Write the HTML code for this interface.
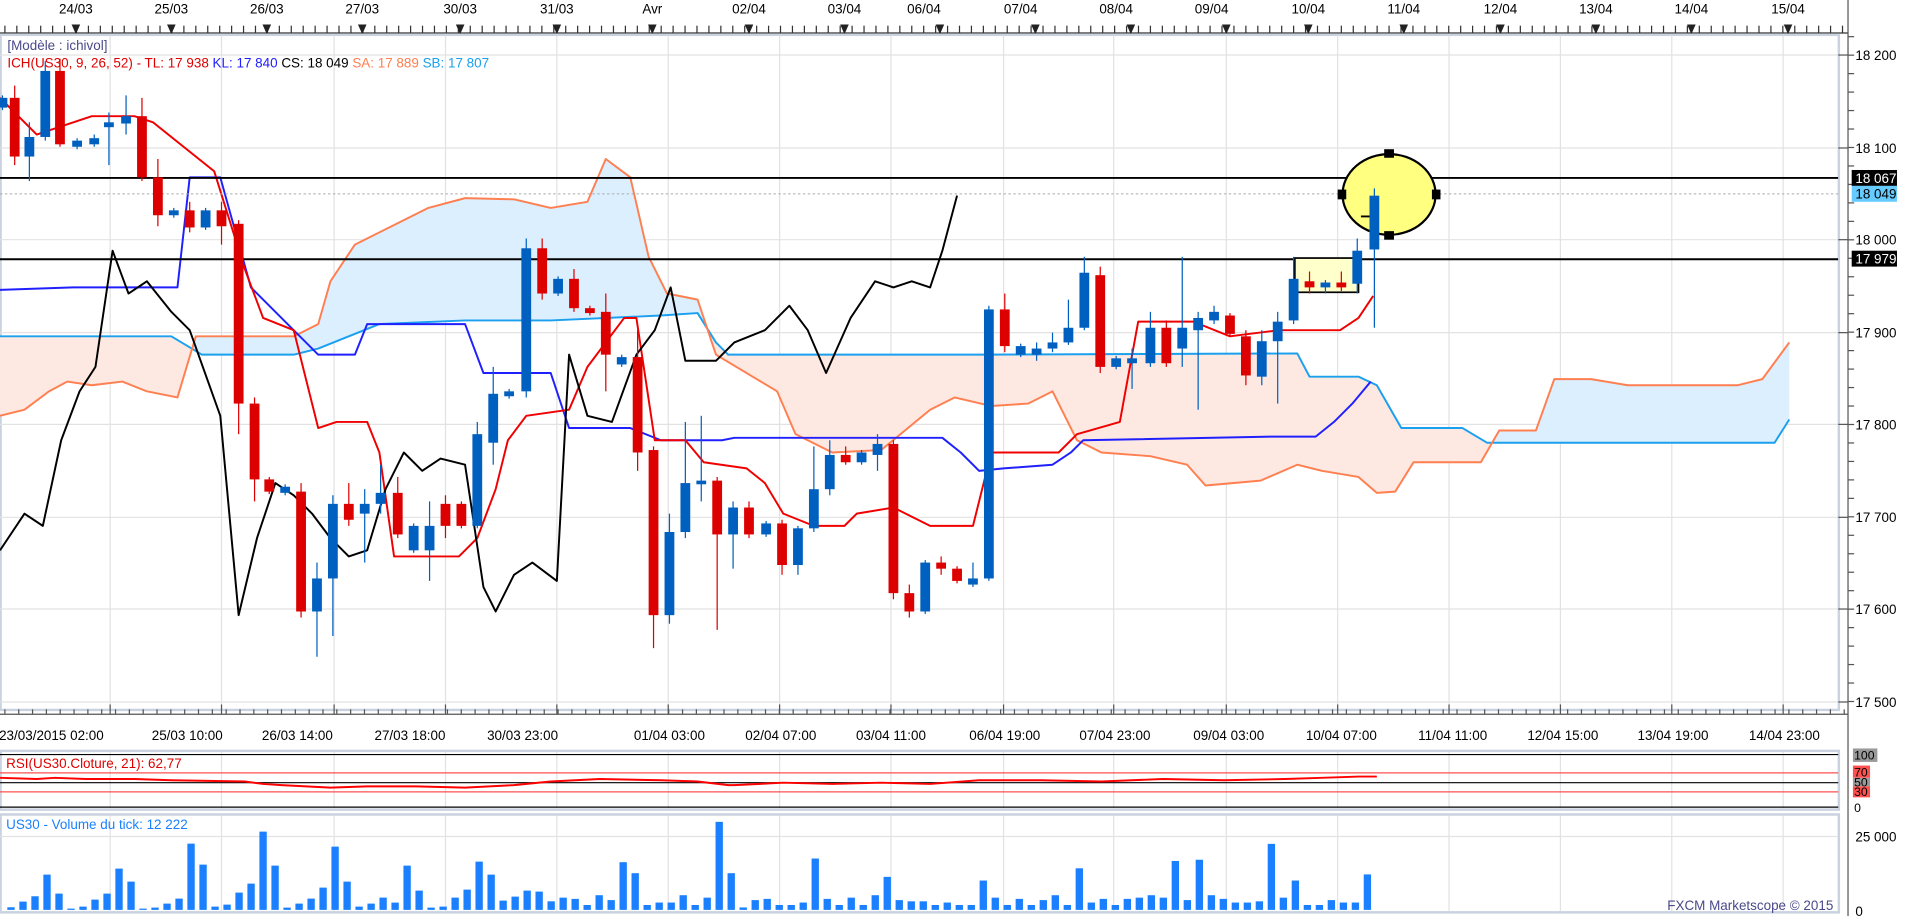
<!DOCTYPE html>
<html><head><meta charset="utf-8"><style>
html,body{margin:0;padding:0;background:#fff;overflow:hidden}
svg{display:block}
text{font-family:"Liberation Sans",sans-serif}
</style></head><body>
<svg id="s" width="1919" height="916" viewBox="0 0 1568 749" preserveAspectRatio="none" xmlns="http://www.w3.org/2000/svg">
<defs>
<clipPath id="main"><rect x="0" y="28" width="1502" height="552"/></clipPath>
</defs>
<rect width="1568" height="749" fill="#fff"/>
<g id="topax"></g>
<g font-size="11" fill="#000" text-anchor="middle">
<text x="62" y="11">24/03</text><text x="140" y="11">25/03</text><text x="218" y="11">26/03</text><text x="296" y="11">27/03</text><text x="376" y="11">30/03</text><text x="455" y="11">31/03</text><text x="533" y="11">Avr</text><text x="612" y="11">02/04</text><text x="690" y="11">03/04</text><text x="755" y="11">06/04</text><text x="834" y="11">07/04</text><text x="912" y="11">08/04</text><text x="990" y="11">09/04</text><text x="1069" y="11">10/04</text><text x="1147" y="11">11/04</text><text x="1226" y="11">12/04</text><text x="1304" y="11">13/04</text><text x="1382" y="11">14/04</text><text x="1461" y="11">15/04</text>
</g>
<rect x="0.5" y="28.5" width="1502" height="552" fill="#fff" stroke="#c9d2de" stroke-width="2"/>
<g id="grid" stroke="#e2e2e2" stroke-width="1"></g>
<g clip-path="url(#main)">
<g id="cloud"></g>
<g id="lines" fill="none" stroke-width="1.6" stroke-linejoin="round"></g>
<line x1="0" y1="145.5" x2="1502" y2="145.5" stroke="#000" stroke-width="1.6"/>
<line x1="0" y1="212" x2="1502" y2="212" stroke="#000" stroke-width="1.6"/>
<line x1="0" y1="158.5" x2="1502" y2="158.5" stroke="#aaa" stroke-width="0.8" stroke-dasharray="2,2"/>
<rect x="1058" y="211" width="52" height="28" fill="#ffffcc" stroke="#000" stroke-width="1.4"/>
<g id="candles"></g>
<ellipse cx="1135" cy="159" rx="38" ry="33" fill="#ffff80" stroke="#000" stroke-width="1.8"/>
<g fill="#000"><rect x="1131" y="122" width="8" height="7"/><rect x="1131" y="189" width="8" height="7"/><rect x="1093" y="155" width="7" height="8"/><rect x="1170" y="155" width="7" height="8"/></g>
<line x1="1112" y1="177" x2="1126" y2="177" stroke="#000" stroke-width="1.5"/>
<rect x="1119" y="160" width="8" height="44" fill="#0060c0"/><line x1="1123" y1="154" x2="1123" y2="268" stroke="#0060c0"/>
</g>
<text x="6" y="41" font-size="11" fill="#4a4a8a">[Modèle : ichivol]</text>
<text x="6" y="55" font-size="11"><tspan fill="#e00000">ICH(US30, 9, 26, 52) -  TL: 17 938  </tspan><tspan fill="#2020ff">KL: 17 840  </tspan><tspan fill="#000">CS: 18 049  </tspan><tspan fill="#ff7f50">SA: 17 889  </tspan><tspan fill="#1aa0ee">SB: 17 807</tspan></text>
<line x1="1510" y1="0" x2="1510" y2="749" stroke="#555" stroke-width="1"/>
<g id="rticks" stroke="#555"></g>
<g font-size="11" fill="#000">
<text x="1516" y="49">18 200</text><text x="1516" y="125">18 100</text><text x="1516" y="200">18 000</text><text x="1516" y="276">17 900</text><text x="1516" y="351">17 800</text><text x="1516" y="427">17 700</text><text x="1516" y="502">17 600</text><text x="1516" y="578">17 500</text>
</g>
<rect x="1513" y="139" width="37" height="13" fill="#000"/><text x="1516" y="149.5" font-size="11" fill="#fff">18 067</text>
<rect x="1513" y="152" width="37" height="13" fill="#66ccff"/><text x="1516" y="162.5" font-size="11" fill="#000">18 049</text>
<rect x="1513" y="205" width="37" height="13" fill="#000"/><text x="1516" y="215.5" font-size="11" fill="#fff">17 979</text>
<line x1="0" y1="584" x2="1510" y2="584" stroke="#555"/>
<g id="btick" stroke="#555"></g>
<g font-size="11" fill="#000" text-anchor="middle">
<text x="42" y="605">23/03/2015 02:00</text><text x="153" y="605">25/03 10:00</text><text x="243" y="605">26/03 14:00</text><text x="335" y="605">27/03 18:00</text><text x="427" y="605">30/03 23:00</text><text x="547" y="605">01/04 03:00</text><text x="638" y="605">02/04 07:00</text><text x="728" y="605">03/04 11:00</text><text x="821" y="605">06/04 19:00</text><text x="911" y="605">07/04 23:00</text><text x="1004" y="605">09/04 03:00</text><text x="1096" y="605">10/04 07:00</text><text x="1187" y="605">11/04 11:00</text><text x="1277" y="605">12/04 15:00</text><text x="1367" y="605">13/04 19:00</text><text x="1458" y="605">14/04 23:00</text>
</g>
<rect x="0.5" y="614" width="1502" height="48" fill="#fff" stroke="#c9d2de" stroke-width="2"/>
<g id="grid2" stroke="#e2e2e2"></g>
<line x1="0" y1="617" x2="1502" y2="617" stroke="#000"/>
<line x1="0" y1="632" x2="1502" y2="632" stroke="#ff5050"/>
<line x1="0" y1="640" x2="1502" y2="640" stroke="#000"/>
<line x1="0" y1="647.5" x2="1502" y2="647.5" stroke="#ff5050"/>
<line x1="0" y1="660" x2="1502" y2="660" stroke="#000"/>
<polyline id="rsi" fill="none" stroke="#f00" stroke-width="1.6" points=""/>
<text x="5" y="628" font-size="11" fill="#e00000">RSI(US30.Cloture, 21): 62,77</text>
<rect x="1514" y="612" width="20" height="11" fill="#999"/><text x="1515" y="621" font-size="10" fill="#000">100</text>
<rect x="1514" y="626" width="14" height="10" fill="#ff5050"/><text x="1515" y="635" font-size="10" fill="#000">70</text>
<rect x="1514" y="636" width="14" height="7" fill="#999"/><text x="1515" y="643" font-size="10" fill="#000">50</text>
<rect x="1514" y="643" width="14" height="9" fill="#ff5050"/><text x="1515" y="651" font-size="10" fill="#000">30</text>
<text x="1515" y="664" font-size="10" fill="#000">0</text>
<rect x="0.5" y="666" width="1502" height="80" fill="#fff" stroke="#c9d2de" stroke-width="2"/>
<g id="grid3" stroke="#e2e2e2"></g>
<line x1="0" y1="684" x2="1502" y2="684" stroke="#e2e2e2"/>
<g id="vol" fill="#1a80ff"></g>
<text x="5" y="678" font-size="11" fill="#1a80ff">US30 - Volume du tick: 12 222</text>
<text x="1516" y="688" font-size="11" fill="#000">25 000</text>
<text x="1516" y="749" font-size="11" fill="#000">0</text>
<text x="1498" y="744" font-size="11" fill="#4a4a8a" text-anchor="end">FXCM Marketscope © 2015</text>
</svg>
<script>
const NS="http://www.w3.org/2000/svg";
function el(p,t,a){const e=document.createElementNS(NS,t);for(const k in a)e.setAttribute(k,a[k]);document.getElementById(p).appendChild(e);return e;}
el("topax","line",{x1:0,y1:27,x2:1510,y2:27,stroke:"#333"});
for(let x=4;x<1510;x+=9.75)el("topax","line",{x1:x,y1:21,x2:x,y2:27,stroke:"#333"});
[62,140,218,296,376,455,533,612,690,768,846,924,1002,1069,1147,1226,1304,1382,1461].forEach(x=>el("topax","path",{d:`M${x-3.5} 20 L${x+3.5} 20 L${x} 28 Z`,fill:"#222"}));
const gx=[90,181,273,364,455,546,637,728,820,910,1002,1093,1184,1275,1366,1457];
gx.forEach(x=>{el("grid","line",{x1:x,y1:29,x2:x,y2:580});el("grid2","line",{x1:x,y1:615,x2:x,y2:661});el("grid3","line",{x1:x,y1:667,x2:x,y2:745});el("btick","line",{x1:x,y1:576,x2:x,y2:584});});
for(let x=4;x<1510;x+=11.3)el("btick","line",{x1:x,y1:580,x2:x,y2:584});
[45,121,196,272,347,423,498,574].forEach(y=>{el("grid","line",{x1:0,y1:y,x2:1502,y2:y});el("rticks","line",{x1:1502,y1:y,x2:1510,y2:y});});
for(let y=30;y<580;y+=15.1)el("rticks","line",{x1:1510,y1:y,x2:1515,y2:y});
const TL=[[0,80],[30,110],[75,95],[110,95],[125,100],[175,140],[200,220],[215,260],[240,270],[260,350],[275,345],[300,345],[310,370],[322,455],[375,455],[390,440],[405,400],[415,360],[430,340],[465,335],[480,300],[510,260],[520,260],[535,360],[560,360],[575,378],[610,383],[625,395],[640,420],[665,430],[690,430],[700,420],[730,415],[760,430],[795,430],[810,370],[865,370],[880,355],[915,345],[930,263],[975,263],[1005,275],[1045,270],[1095,270],[1110,260],[1122,242]];
const KL=[[0,237],[60,235],[145,235],[155,145],[180,145],[205,235],[260,290],[290,290],[300,265],[380,265],[395,305],[450,305],[465,350],[515,350],[540,360],[590,360],[600,358],[770,358],[785,370],[800,385],[820,383],[860,380],[875,370],[885,360],[1040,357],[1075,357],[1090,345],[1105,330],[1120,312]];
const SB=[[0,275],[140,275],[165,290],[240,290],[260,285],[310,265],[380,262],[450,262],[540,258],[570,256],[585,280],[595,290],[800,290],[1060,289],[1070,308],[1110,308],[1125,315],[1145,350],[1195,350],[1215,362],[1450,362],[1462,343]];
const SA=[[0,340],[20,335],[40,320],[55,312],[75,315],[100,312],[120,320],[145,325],[160,275],[240,275],[260,265],[270,230],[290,200],[320,185],[350,170],[380,162],[420,163],[450,170],[480,165],[495,130],[515,145],[530,210],[545,240],[570,245],[585,290],[635,320],[650,355],[680,370],[720,368],[760,335],[780,325],[810,332],[840,330],[860,320],[880,360],[900,370],[940,373],[970,380],[985,397],[1030,393],[1060,380],[1080,385],[1110,390],[1125,403],[1140,402],[1155,378],[1210,378],[1225,352],[1255,352],[1270,310],[1300,310],[1330,315],[1420,315],[1440,310],[1462,280]];
const CS=[[0,450],[20,420],[35,430],[50,360],[65,320],[78,300],[92,205],[105,240],[120,230],[140,255],[155,270],[180,340],[195,503],[210,440],[225,395],[240,405],[255,420],[270,440],[285,455],[300,450],[315,400],[330,370],[345,385],[360,375],[380,380],[395,480],[405,500],[420,470],[435,460],[455,475],[465,290],[480,340],[500,345],[520,290],[535,270],[548,235],[560,295],[585,295],[600,280],[625,270],[645,250],[660,270],[675,305],[695,260],[715,230],[730,235],[745,230],[760,235],[770,205],[782,160]];
const P=a=>a.map(p=>p.join(",")).join(" ");
const band=P(SA)+" "+P(SB.slice().reverse());
const cp1=el("cloud","clipPath",{id:"above"});const c1=document.createElementNS(NS,"polygon");c1.setAttribute("points","0,0 "+P(SB)+" 1568,362 1568,0");cp1.appendChild(c1);
const cp2=el("cloud","clipPath",{id:"below"});const c2=document.createElementNS(NS,"polygon");c2.setAttribute("points","0,749 "+P(SB)+" 1568,362 1568,749");cp2.appendChild(c2);
el("cloud","polygon",{points:band,fill:"#dcefff","clip-path":"url(#above)"});
el("cloud","polygon",{points:band,fill:"#fde9e2","clip-path":"url(#below)"});
el("lines","polyline",{points:P(SB),stroke:"#1aa0ee"});
el("lines","polyline",{points:P(SA),stroke:"#ff7f50"});
el("lines","polyline",{points:P(KL),stroke:"#2020ff"});
el("lines","polyline",{points:P(TL),stroke:"#f00000"});
el("lines","polyline",{points:P(CS),stroke:"#000"});
const C=[[2,80,88,78,90,1],[12,80,128,70,135,0],[24,112,128,100,148,1],[37,58,112,50,115,1],[49,58,118,48,120,0],[63,115,120,113,122,1],[77,113,118,110,120,1],[89,100,104,92,135,1],[103,95,101,78,110,1],[116,95,145,80,148,0],[129,145,176,130,185,0],[142,172,176,170,178,1],[155,172,186,165,190,0],[168,172,186,170,188,1],[181,172,185,165,200,0],[195,183,330,180,355,0],[208,330,392,325,410,0],[220,392,402,390,404,0],[233,398,403,396,405,1],[246,402,500,395,505,0],[259,473,500,460,537,1],[272,412,473,405,520,1],[285,412,425,395,430,0],[298,412,420,400,460,1],[311,403,412,380,420,1],[325,403,437,390,440,0],[338,430,450,428,452,1],[351,430,450,410,475,1],[364,412,430,405,440,0],[377,412,430,410,432,0],[390,355,430,345,432,1],[403,322,362,300,380,1],[416,320,324,318,326,1],[430,203,320,195,325,1],[443,203,240,195,245,0],[456,228,240,226,242,1],[469,228,252,220,255,0],[482,252,256,250,258,0],[495,255,290,240,320,0],[508,292,298,290,300,1],[521,292,370,270,385,0],[534,368,503,365,530,0],[547,435,503,420,510,1],[560,395,435,345,440,1],[573,393,396,340,410,1],[586,393,437,390,515,0],[599,415,437,410,465,1],[612,415,437,410,440,0],[626,428,437,426,439,1],[639,428,462,425,470,0],[652,432,462,430,470,1],[665,400,432,365,435,1],[678,372,400,360,405,1],[691,372,378,365,380,0],[704,370,378,368,380,1],[717,363,372,355,385,1],[730,363,485,360,490,0],[743,485,500,478,505,0],[756,460,500,458,502,1],[769,460,465,455,470,0],[782,465,475,463,477,0],[795,473,478,460,480,1],[808,253,473,250,475,1],[821,253,283,240,288,0],[834,283,290,281,292,1],[847,285,290,280,295,1],[860,280,285,272,288,1],[873,268,280,245,282,1],[886,223,268,210,270,1],[899,225,300,218,305,0],[912,293,300,291,302,1],[925,293,297,285,318,1],[940,268,297,255,300,1],[953,268,297,262,300,0],[966,268,285,210,300,1],[979,260,270,255,335,1],[992,255,262,250,265,1],[1005,258,273,256,275,0],[1018,275,307,270,315,0],[1031,279,308,270,315,1],[1044,263,279,255,330,1],[1057,228,262,210,265,1],[1070,230,235,222,240,0],[1083,231,235,229,240,1],[1096,231,235,222,238,0],[1109,205,232,195,240,1]];
C.forEach(c=>{const col=c[5]?"#0060c0":"#dd0000";el("candles","line",{x1:c[0],y1:c[3],x2:c[0],y2:c[4],stroke:col,"stroke-width":1});el("candles","rect",{x:c[0]-4,y:c[1],width:8,height:Math.max(2,c[2]-c[1]),fill:col});});
const z=[503,486,470,405,462,507,501,480,462,387,426,507,504,492,477,312,375,501,495,459,432,276,378,504,492,477,444,321,426,501,492,474,489,378,453,504,501,474,450,366,405,483,471,453,456];
const V=[[443,738],[456,735],[469,733],[482,738],[495,730],[508,703],[521,712],[534,738],[547,736],[560,730],[573,738],[586,670],[599,712],[612,740],[626,733],[639,738],[652,738],[665,700],[678,733],[691,738],[704,738],[717,730],[730,715],[743,735],[756,735],[769,738],[782,738],[795,738],[808,718],[821,738],[834,733],[847,738],[860,730],[873,738],[886,708],[899,733],[912,738],[925,733],[940,730],[953,732],[966,702],[979,701],[992,730],[1005,733],[1018,736],[1031,735],[1044,688],[1057,718],[1070,738],[1083,738],[1096,736],[1109,736],[1122,713]];
const S=1.2235,base=744;const used=new Set();
for(let i=0;;i++){const x=(11+12*i)/S;if(x>1126)break;let top;
 if(i<z.length)top=(740+z[i]/3)/S;else{let bi=0,d=1e9;V.forEach((v,j)=>{const dd=Math.abs(v[0]-x);if(dd<d){d=dd;bi=j;}});
  if(used.has(bi)){top=738-((i*7)%6);}else{used.add(bi);top=V[bi][1]+2;}}
 el("vol","rect",{x:x-3,y:top,width:6,height:Math.max(1,base-top)});}
const rs=[[0,636],[30,637],[45,636],[70,637],[110,637],[140,638],[200,639],[215,641],[230,642],[270,644],[300,643],[340,643],[380,644],[420,642],[450,639],[470,638],[490,637],[540,638],[570,639],[595,642],[600,642],[640,640],[680,641],[720,640],[760,641],[800,638],[850,638],[900,639],[950,637],[1000,638],[1050,637],[1080,636],[1110,635],[1125,635]];
document.getElementById("rsi").setAttribute("points",P(rs));
</script>
</body></html>
